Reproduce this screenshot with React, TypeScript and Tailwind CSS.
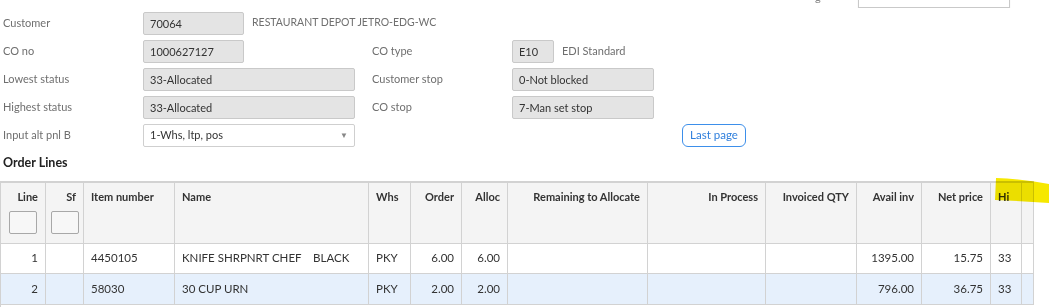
import React from "react";

const font = { fontFamily: "Lato, 'Open Sans', sans-serif" };

const Field = ({ w, value }: { w: string; value: string }) => (
  <div
    className={`${w} h-[23px] shrink-0 rounded-[2px] border border-[#c9c9c9] bg-[#e4e4e4] px-[6px] text-[11px] leading-[21px] text-[#333]`}
  >
    {value}
  </div>
);

const Label = ({ w, text }: { w: string; text: string }) => (
  <div className={`${w} shrink-0 text-[11px] text-[#6f6f6f]`}>{text}</div>
);

type Col = { key: string; title: string; w: string; align: "left" | "right" };

const cols: Col[] = [
  { key: "line", title: "Line", w: "w-[45px]", align: "right" },
  { key: "sf", title: "Sf", w: "w-[38px]", align: "right" },
  { key: "item", title: "Item number", w: "w-[91px]", align: "left" },
  { key: "name", title: "Name", w: "w-[194px]", align: "left" },
  { key: "whs", title: "Whs", w: "w-[42px]", align: "left" },
  { key: "order", title: "Order", w: "w-[51px]", align: "right" },
  { key: "alloc", title: "Alloc", w: "w-[46px]", align: "right" },
  { key: "rem", title: "Remaining to Allocate", w: "w-[140px]", align: "right" },
  { key: "proc", title: "In Process", w: "w-[118px]", align: "right" },
  { key: "inv", title: "Invoiced QTY", w: "w-[91px]", align: "right" },
  { key: "avail", title: "Avail inv", w: "w-[65px]", align: "right" },
  { key: "price", title: "Net price", w: "w-[69px]", align: "right" },
  { key: "hi", title: "Hi", w: "w-[31px]", align: "left" },
  { key: "pad", title: "", w: "w-[12px]", align: "left" },
];

const rows: Record<string, string>[] = [
  { line: "1", item: "4450105", name: "KNIFE SHRPNRT CHEF    BLACK", whs: "PKY", order: "6.00", alloc: "6.00", avail: "1395.00", price: "15.75", hi: "33" },
  { line: "2", item: "58030", name: "30 CUP URN", whs: "PKY", order: "2.00", alloc: "2.00", avail: "796.00", price: "36.75", hi: "33" },
];

export default function App() {
  return (
    <div className="relative h-[307px] w-[1049px] overflow-hidden bg-white" style={font}>
      {/* field cut off by the top edge */}
      <div className="flex h-[8px] items-end overflow-hidden pl-[815px]">
        <div className="w-[43px] shrink-0 text-[11px] leading-[22px] text-[#888]">g</div>
        <div className="h-[24px] w-[152px] shrink-0 border border-[#c9c9c9] bg-white px-[6px] text-[11px] leading-[22px] text-[#444] shadow-[0_1px_1px_rgba(0,0,0,0.1)]">
          1-Order line no
        </div>
      </div>

      <div className="flex flex-col pl-[3px] pt-[1px]">
        <div className="flex h-[28px] items-center">
          <Label w="w-[140px]" text="Customer" />
          <Field w="w-[101px]" value="70064" />
          <div className="pl-[8px] text-[10.5px] text-[#6f6f6f]">RESTAURANT DEPOT JETRO-EDG-WC</div>
        </div>
        <div className="flex h-[28px] items-center">
          <Label w="w-[140px]" text="CO no" />
          <Field w="w-[101px]" value="1000627127" />
          <div className="w-[128px] shrink-0" />
          <Label w="w-[140px]" text="CO type" />
          <Field w="w-[42px]" value="E10" />
          <div className="pl-[8px] text-[11px] text-[#6f6f6f]">EDI Standard</div>
        </div>
        <div className="flex h-[28px] items-center">
          <Label w="w-[140px]" text="Lowest status" />
          <Field w="w-[212px]" value="33-Allocated" />
          <div className="w-[17px] shrink-0" />
          <Label w="w-[140px]" text="Customer stop" />
          <Field w="w-[142px]" value="0-Not blocked" />
        </div>
        <div className="flex h-[28px] items-center">
          <Label w="w-[140px]" text="Highest status" />
          <Field w="w-[212px]" value="33-Allocated" />
          <div className="w-[17px] shrink-0" />
          <Label w="w-[140px]" text="CO stop" />
          <Field w="w-[142px]" value="7-Man set stop" />
        </div>
        <div className="flex h-[28px] items-center">
          <Label w="w-[140px]" text="Input alt pnl B" />
          <div className="flex h-[23px] w-[212px] shrink-0 items-center justify-between rounded-[2px] border border-[#cfcfcf] bg-white px-[6px] text-[11px] text-[#333]">
            <span>1-Whs, ltp, pos</span>
            <span className="text-[8px] text-[#888]">▼</span>
          </div>
          <div className="w-[327px] shrink-0" />
          <button className="h-[23px] w-[64px] rounded-[6px] border border-[#3d8fea] bg-white text-[11.5px] text-[#2f7fdc]">
            Last page
          </button>
        </div>
      </div>

      <div className="h-[32px] pl-[3px] pt-[6px] text-[12.5px] font-bold leading-[16px] text-[#222]">Order Lines</div>

      <table className="w-[1033px] table-fixed border-collapse border-t-2 border-[#d2d2d2] text-[11px] text-[#333]">
        <colgroup>
          {cols.map((c) => (
            <col key={c.key} className={c.w} />
          ))}
        </colgroup>
        <thead>
          <tr className="h-[61px] bg-[#f4f4f4]">
            {cols.map((c) => (
              <th
                key={c.key}
                className={`overflow-hidden whitespace-nowrap border border-[#d2d2d2] px-[7px] pt-[7px] align-top font-bold leading-[14px] text-[#333] ${
                  c.align === "right" ? "text-right" : "text-left"
                }`}
              >
                <div>{c.title}</div>
                {(c.key === "line" || c.key === "sf") && (
                  <div className="mt-[7px] flex justify-center">
                    <div className="h-[23px] w-[28px] shrink-0 rounded-[2px] border border-[#a8a8a8] bg-[#f7f7f7]" />
                  </div>
                )}
              </th>
            ))}
          </tr>
        </thead>
        <tbody>
          {rows.map((r, i) => (
            <tr key={i} className={`${i === 0 ? "h-[30px] bg-white" : "h-[31px] bg-[#e6f0fc]"}`}>
              {cols.map((c) => (
                <td
                  key={c.key}
                  className={`overflow-hidden whitespace-pre border border-[#d2d2d2] px-[7px] text-[11.5px] ${
                    c.align === "right" ? "text-right" : "text-left"
                  }`}
                >
                  {r[c.key] ?? ""}
                </td>
              ))}
            </tr>
          ))}
          <tr className="h-[10px] bg-white">
            <td className="border-l border-[#d2d2d2]" colSpan={14} />
          </tr>
        </tbody>
      </table>

      {/* yellow marker highlight */}
      <svg className="pointer-events-none absolute left-[993px] top-[176px] mix-blend-multiply" width="56" height="30" viewBox="0 0 56 30">
        <path d="M3 2 Q30 3 56 8 L56 27 Q30 25 2 24 Z" fill="#f6e800" />
      </svg>
    </div>
  );
}
